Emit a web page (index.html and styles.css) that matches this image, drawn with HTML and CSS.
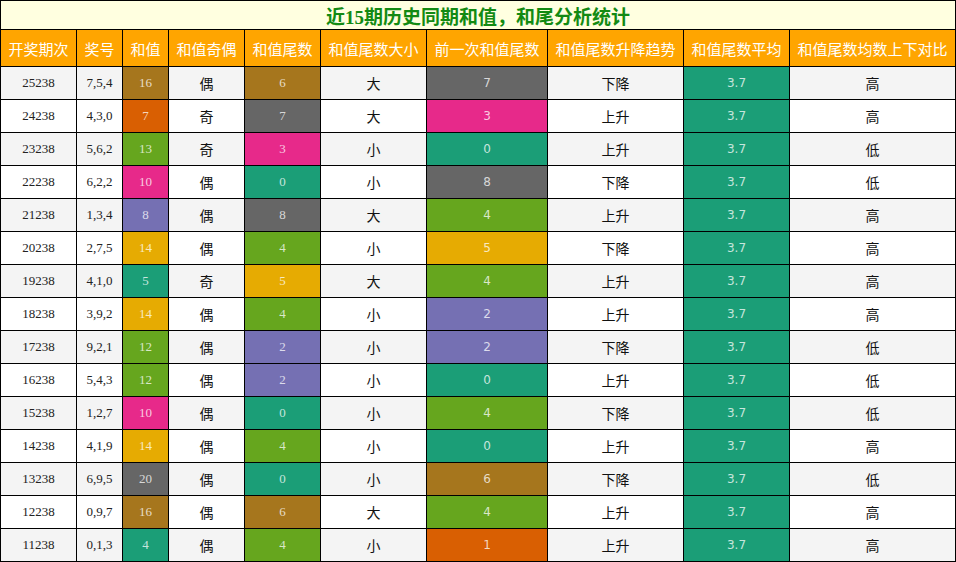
FILE: index.html
```html
<!DOCTYPE html>
<html lang="zh-CN">
<head>
<meta charset="utf-8">
<title>近15期历史同期和值，和尾分析统计</title>
<link rel="stylesheet" href="styles.css">
</head>
<body>
<table class="stats">
<colgroup>
<col class="c1"><col class="c2"><col class="c3"><col class="c4"><col class="c5"><col class="c6"><col class="c7"><col class="c8"><col class="c9"><col class="c10">
</colgroup>
<thead>
<tr class="title-row"><th colspan="10" class="title">近15期历史同期和值，和尾分析统计</th></tr>
<tr class="head-row">
<th>开奖期次</th><th>奖号</th><th>和值</th><th>和值奇偶</th><th>和值尾数</th><th>和值尾数大小</th><th>前一次和值尾数</th><th>和值尾数升降趋势</th><th>和值尾数平均</th><th>和值尾数均数上下对比</th>
</tr>
</thead>
<tbody>
<tr><td class="num">25238</td><td class="num">7,5,4</td><td class="num k6">16</td><td>偶</td><td class="num k6">6</td><td>大</td><td class="sans k7">7</td><td>下降</td><td class="sans k0">3.7</td><td>高</td></tr>
<tr><td class="num">24238</td><td class="num">4,3,0</td><td class="num k1">7</td><td>奇</td><td class="num k7">7</td><td>大</td><td class="sans k3">3</td><td>上升</td><td class="sans k0">3.7</td><td>高</td></tr>
<tr><td class="num">23238</td><td class="num">5,6,2</td><td class="num k4">13</td><td>奇</td><td class="num k3">3</td><td>小</td><td class="sans k0">0</td><td>上升</td><td class="sans k0">3.7</td><td>低</td></tr>
<tr><td class="num">22238</td><td class="num">6,2,2</td><td class="num k3">10</td><td>偶</td><td class="num k0">0</td><td>小</td><td class="sans k7">8</td><td>下降</td><td class="sans k0">3.7</td><td>低</td></tr>
<tr><td class="num">21238</td><td class="num">1,3,4</td><td class="num k2">8</td><td>偶</td><td class="num k7">8</td><td>大</td><td class="sans k4">4</td><td>上升</td><td class="sans k0">3.7</td><td>高</td></tr>
<tr><td class="num">20238</td><td class="num">2,7,5</td><td class="num k5">14</td><td>偶</td><td class="num k4">4</td><td>小</td><td class="sans k5">5</td><td>下降</td><td class="sans k0">3.7</td><td>高</td></tr>
<tr><td class="num">19238</td><td class="num">4,1,0</td><td class="num k0">5</td><td>奇</td><td class="num k5">5</td><td>大</td><td class="sans k4">4</td><td>上升</td><td class="sans k0">3.7</td><td>高</td></tr>
<tr><td class="num">18238</td><td class="num">3,9,2</td><td class="num k5">14</td><td>偶</td><td class="num k4">4</td><td>小</td><td class="sans k2">2</td><td>上升</td><td class="sans k0">3.7</td><td>高</td></tr>
<tr><td class="num">17238</td><td class="num">9,2,1</td><td class="num k4">12</td><td>偶</td><td class="num k2">2</td><td>小</td><td class="sans k2">2</td><td>下降</td><td class="sans k0">3.7</td><td>低</td></tr>
<tr><td class="num">16238</td><td class="num">5,4,3</td><td class="num k4">12</td><td>偶</td><td class="num k2">2</td><td>小</td><td class="sans k0">0</td><td>上升</td><td class="sans k0">3.7</td><td>低</td></tr>
<tr><td class="num">15238</td><td class="num">1,2,7</td><td class="num k3">10</td><td>偶</td><td class="num k0">0</td><td>小</td><td class="sans k4">4</td><td>下降</td><td class="sans k0">3.7</td><td>低</td></tr>
<tr><td class="num">14238</td><td class="num">4,1,9</td><td class="num k5">14</td><td>偶</td><td class="num k4">4</td><td>小</td><td class="sans k0">0</td><td>上升</td><td class="sans k0">3.7</td><td>高</td></tr>
<tr><td class="num">13238</td><td class="num">6,9,5</td><td class="num k7">20</td><td>偶</td><td class="num k0">0</td><td>小</td><td class="sans k6">6</td><td>下降</td><td class="sans k0">3.7</td><td>低</td></tr>
<tr><td class="num">12238</td><td class="num">0,9,7</td><td class="num k6">16</td><td>偶</td><td class="num k6">6</td><td>大</td><td class="sans k4">4</td><td>上升</td><td class="sans k0">3.7</td><td>高</td></tr>
<tr><td class="num">11238</td><td class="num">0,1,3</td><td class="num k0">4</td><td>偶</td><td class="num k4">4</td><td>小</td><td class="sans k1">1</td><td>上升</td><td class="sans k0">3.7</td><td>高</td></tr>
</tbody>
</table>
</body>
</html>
```

FILE: styles.css
```css
html, body {
  margin: 0;
  padding: 0;
  background: #ffffff;
}

body {
  font-family: "Liberation Serif", "Noto Sans CJK SC", serif;
}

.stats {
  border-collapse: collapse;
  table-layout: fixed;
  width: 956px;
}

.c1 { width: 76px; }
.c2 { width: 46px; }
.c3 { width: 46px; }
.c4 { width: 76px; }
.c5 { width: 76px; }
.c6 { width: 106px; }
.c7 { width: 121px; }
.c8 { width: 136px; }
.c9 { width: 106px; }
.c10 { width: 166px; }

.stats th,
.stats td {
  border: 1px solid #000;
  padding: 0;
  text-align: center;
  vertical-align: middle;
  overflow: hidden;
  white-space: nowrap;
}

.title-row { height: 29px; }

.title {
  background: #ffffe0;
  color: #138a13;
  font-family: "Liberation Serif", "Noto Sans CJK SC", serif;
  font-size: 19px;
  font-weight: bold;
}

.head-row { height: 37px; }

.head-row th {
  background: #ffa500;
  color: #ffffff;
  font-family: "Noto Sans CJK SC", sans-serif;
  font-size: 15px;
  font-weight: normal;
}

.stats tbody tr { height: 33px; }

.stats tbody tr:nth-child(odd) td { background: #f4f4f4; }
.stats tbody tr:nth-child(even) td { background: #ffffff; }

.stats td {
  font-family: "Noto Sans CJK SC", sans-serif;
  font-size: 14px;
  color: #111;
}

.stats td.num {
  font-family: "Liberation Serif", serif;
  font-size: 13px;
  color: #222;
}

.stats td.sans {
  font-family: "DejaVu Sans", sans-serif;
  font-size: 12px;
}

.stats tbody tr td.k0 { background: #1b9e77; color: rgba(255,255,255,0.75); }
.stats tbody tr td.k1 { background: #d95f02; color: rgba(255,255,255,0.75); }
.stats tbody tr td.k2 { background: #7570b3; color: rgba(255,255,255,0.75); }
.stats tbody tr td.k3 { background: #e7298a; color: rgba(255,255,255,0.75); }
.stats tbody tr td.k4 { background: #66a61e; color: rgba(255,255,255,0.75); }
.stats tbody tr td.k5 { background: #e6ab02; color: rgba(255,255,255,0.75); }
.stats tbody tr td.k6 { background: #a6761d; color: rgba(255,255,255,0.75); }
.stats tbody tr td.k7 { background: #666666; color: rgba(255,255,255,0.75); }
```
